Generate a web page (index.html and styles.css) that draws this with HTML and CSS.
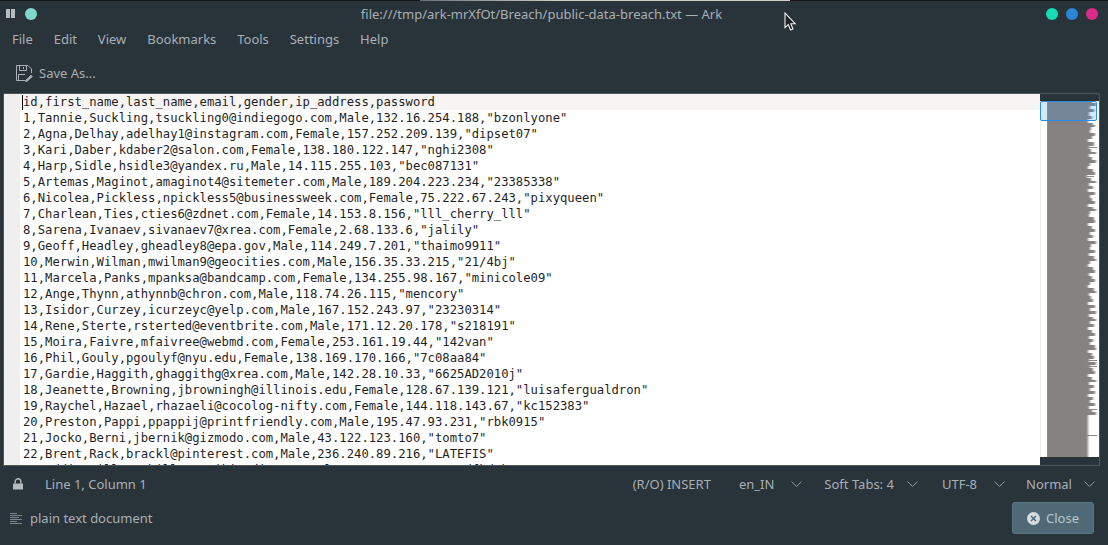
FILE: index.html
```html
<!DOCTYPE html>
<html lang="en">
<head>
    <meta charset="UTF-8" />
    <title>public-data-breach.txt — Ark</title>
    <link rel="stylesheet" href="styles.css">
</head>
<body>
    <div class="window">
        <div class="screen-edge"></div>

        <header class="titlebar">
            <div class="title-left">
                <span class="pause-icon"><i></i><i></i></span>
                <span class="dot dot-pale"></span>
            </div>
            <div class="title-text">file:///tmp/ark-mrXfOt/Breach/public-data-breach.txt — Ark</div>
            <div class="title-right">
                <span class="dot dot-green"></span>
                <span class="dot dot-blue"></span>
                <span class="dot dot-pink"></span>
            </div>
        </header>

        <nav class="menubar">
            <span>File</span>
            <span>Edit</span>
            <span>View</span>
            <span>Bookmarks</span>
            <span>Tools</span>
            <span>Settings</span>
            <span>Help</span>
        </nav>

        <div class="toolbar">
            <svg class="save-icon" width="18" height="18" viewBox="0 0 18 18" fill="none" stroke="#aab3b8" stroke-width="1">
                <path d="M10 16.5H1.5V1.5H13L16.5 5V9" />
                <path d="M4.5 1.5V6.5H11.5V1.5M8.5 3V5" />
                <path d="M3.5 16.5V10.5H10" />
                <path d="M10.5 16.5L16 11L17.5 12.5L12 17.5H10.5Z" fill="#aab3b8" stroke-width=".6" />
            </svg>
            <span>Save As...</span>
        </div>

        <main class="editor">
            <div class="gutter"></div>
            <div class="text-area">
                <span class="caret"></span>
                <div class="line line-current">id,first_name,last_name,email,gender,ip_address,password</div>
                <div class="line">1,Tannie,Suckling,tsuckling0@indiegogo.com,Male,132.16.254.188,"bzonlyone"</div>
                <div class="line">2,Agna,Delhay,adelhay1@instagram.com,Female,157.252.209.139,"dipset07"</div>
                <div class="line">3,Kari,Daber,kdaber2@salon.com,Female,138.180.122.147,"nghi2308"</div>
                <div class="line">4,Harp,Sidle,hsidle3@yandex.ru,Male,14.115.255.103,"bec087131"</div>
                <div class="line">5,Artemas,Maginot,amaginot4@sitemeter.com,Male,189.204.223.234,"23385338"</div>
                <div class="line">6,Nicolea,Pickless,npickless5@businessweek.com,Female,75.222.67.243,"pixyqueen"</div>
                <div class="line">7,Charlean,Ties,cties6@zdnet.com,Female,14.153.8.156,"lll_cherry_lll"</div>
                <div class="line">8,Sarena,Ivanaev,sivanaev7@xrea.com,Female,2.68.133.6,"jalily"</div>
                <div class="line">9,Geoff,Headley,gheadley8@epa.gov,Male,114.249.7.201,"thaimo9911"</div>
                <div class="line">10,Merwin,Wilman,mwilman9@geocities.com,Male,156.35.33.215,"21/4bj"</div>
                <div class="line">11,Marcela,Panks,mpanksa@bandcamp.com,Female,134.255.98.167,"minicole09"</div>
                <div class="line">12,Ange,Thynn,athynnb@chron.com,Male,118.74.26.115,"mencory"</div>
                <div class="line">13,Isidor,Curzey,icurzeyc@yelp.com,Male,167.152.243.97,"23230314"</div>
                <div class="line">14,Rene,Sterte,rsterted@eventbrite.com,Male,171.12.20.178,"s218191"</div>
                <div class="line">15,Moira,Faivre,mfaivree@webmd.com,Female,253.161.19.44,"142van"</div>
                <div class="line">16,Phil,Gouly,pgoulyf@nyu.edu,Female,138.169.170.166,"7c08aa84"</div>
                <div class="line">17,Gardie,Haggith,ghaggithg@xrea.com,Male,142.28.10.33,"6625AD2010j"</div>
                <div class="line">18,Jeanette,Browning,jbrowningh@illinois.edu,Female,128.67.139.121,"luisafergualdron"</div>
                <div class="line">19,Raychel,Hazael,rhazaeli@cocolog-nifty.com,Female,144.118.143.67,"kc152383"</div>
                <div class="line">20,Preston,Pappi,ppappij@printfriendly.com,Male,195.47.93.231,"rbk0915"</div>
                <div class="line">21,Jocko,Berni,jbernik@gizmodo.com,Male,43.122.123.160,"tomto7"</div>
                <div class="line">22,Brent,Rack,brackl@pinterest.com,Male,236.240.89.216,"LATEFIS"</div>
                <div class="line">23,Addie,Hiller,ahillerm@wikimedia.org,Male,61.172.148.119,"dfkdsk"</div>
            </div>
            <aside class="minimap">
                <svg class="minimap-text" width="51" height="356" viewBox="0 0 51 356">
                    <defs>
                        <filter id="soft" x="-5%" y="-1%" width="110%" height="102%">
                            <feGaussianBlur stdDeviation="1.1 0.4" />
                        </filter>
                    </defs>
                    <path fill="#858281" filter="url(#soft)" transform="translate(2 0)" d="M-3 -1H43v3H47v3H41v3H45v3H40v4H43v3H39v4H44v2H46v2H42v3H41v3H46v3H43v3H39v3H45v4H40v3H42v3H47v2H40v3H43v3H47v3H41v3H39v3H44v3H46v3H38v3H42v3H47v2H40v3H44v3H39v3H46v3H41v3H43v3H46v3H39v3H44v2H47v2H41v3H40v3H45v3H46v3H39v3H43v3H46v3H41v3H44v3H39v3H47v3H42v3H41v3H46v3H40v3H45v3H47v2H41v3H39v3H44v3H46v3H40v3H43v3H46v3H41v3H39v3H45v3H47v2H40v3H42v3H44v3H39v3H46v3H41v3H47v3H40v3H44v2H47v2H41v3H45v3H39v3H43v3H46v3H40v3H44v3H41v3H46v3H47v2H39v3H43v3H45v3H40v3H47v3H41v3H44v3H46v3H39v3H43v3H47v2H40v3H45v3H41v3H46v3H39v3H44v3H41v3H46v3H40v3H43v3H47v3H39V357H-3Z" />
                    <path fill="none" stroke="#8a8785" stroke-width="1" d="M40 46.5H50M40 75.5H47M40 259.5H50M40 265.5H50M40 308.5H50M40 334.5H50" />
                </svg>
                <div class="minimap-view"></div>
            </aside>
        </main>

        <div class="statusbar">
            <svg class="lock-icon" width="12" height="12" viewBox="0 0 12 12">
                <path fill="#b4bbbf" d="M1 5.5H11V11.5H1Z" />
                <path fill="none" stroke="#b4bbbf" stroke-width="1.4" d="M3.2 5.5V3.6A2.8 2.8 0 0 1 8.8 3.6V5.5" />
            </svg>
            <span class="cursor-pos">Line 1, Column 1</span>
            <span class="mode">(R/O) INSERT</span>
            <span class="combo combo-lang">en_IN <svg class="chevron" width="11" height="6" viewBox="0 0 11 6"><path d="M.5 .5L5.5 5.5L10.5 .5" /></svg></span>
            <span class="combo combo-tabs">Soft Tabs: 4 <svg class="chevron" width="11" height="6" viewBox="0 0 11 6"><path d="M.5 .5L5.5 5.5L10.5 .5" /></svg></span>
            <span class="combo combo-enc">UTF-8 <svg class="chevron" width="11" height="6" viewBox="0 0 11 6"><path d="M.5 .5L5.5 5.5L10.5 .5" /></svg></span>
            <span class="combo combo-syntax">Normal <svg class="chevron" width="11" height="6" viewBox="0 0 11 6"><path d="M.5 .5L5.5 5.5L10.5 .5" /></svg></span>
        </div>

        <footer class="footer">
            <svg class="doc-icon" width="13" height="13" viewBox="0 0 13 13" stroke="#7d878d" stroke-width="1">
                <path d="M0 1.5H7M0 3.5H12M0 5.5H9M0 7.5H12M0 9.5H7M0 11.5H12" />
            </svg>
            <span class="doc-type">plain text document</span>
            <button class="close-btn" type="button">
                <svg width="13" height="13" viewBox="0 0 13 13">
                    <circle cx="6.5" cy="6.5" r="6.5" fill="#d5dcdf" />
                    <path d="M4 4L9 9M9 4L4 9" stroke="#4f6a76" stroke-width="1.5" />
                </svg>
                Close
            </button>
        </footer>

        <svg class="mouse-pointer" width="13" height="20" viewBox="0 0 13 20">
            <path d="M1 1V15.5L4.3 12.6L6.6 18L9 17L6.8 11.7H11.2Z" fill="#1c2226" stroke="#f2f2f2" stroke-width="1.1" />
        </svg>
    </div>
</body>
</html>
```

FILE: styles.css
```css
body {
    margin: 0;
    background-color: #29333a;
    color: #a8b0b5;
    font-family: "Noto Sans", sans-serif;
    font-size: 13px;
    overflow: hidden;
}

.window {
    position: relative;
    display: flex;
    flex-direction: column;
    width: 1108px;
    height: 545px;
}

.screen-edge {
    height: 1px;
    background: linear-gradient(90deg, #14181b 0, #14181b 420px, #6b7276 420px, #cfcfcf 560px, #cfcfcf 790px, #14181b 790px);
}

.titlebar {
    display: flex;
    align-items: center;
    justify-content: space-between;
    height: 25px;
    padding: 0 10px 0 6px;
}

.title-left, .title-right {
    display: flex;
    align-items: center;
}

.title-left {
    gap: 10px;
}

.title-right {
    gap: 8px;
}

.title-text {
    font-size: 13px;
    color: #a8b0b5;
}

.pause-icon {
    display: flex;
    gap: 1px;
}

    .pause-icon i {
        width: 4px;
        height: 9px;
        background: #b6bcc0;
    }

.dot {
    width: 12px;
    height: 12px;
    border-radius: 50%;
}

.dot-pale {
    background: #7fd8cb;
}

.dot-green {
    background: #16dbb3;
}

.dot-blue {
    background: #2a84d8;
}

.dot-pink {
    background: #dc2a8a;
}

.menubar {
    display: flex;
    align-items: center;
    gap: 20.9px;
    height: 26px;
    padding-left: 12px;
}

.toolbar {
    display: flex;
    align-items: center;
    gap: 6px;
    height: 41px;
    padding-left: 15px;
}

.editor {
    display: flex;
    height: 371px;
    margin: 0 8px 0 3px;
    border: 1px solid #4b565d;
    border-radius: 2px 2px 0 0;
    overflow: hidden;
    background: #fff;
}

.gutter {
    width: 16px;
    flex-shrink: 0;
    background: #f0efee;
}

.text-area {
    position: relative;
    flex: 1;
    overflow: hidden;
    font-family: "DejaVu Sans Mono", monospace;
    font-size: 12.23px;
    color: #1f1f1f;
}

.line {
    box-sizing: border-box;
    height: 16px;
    line-height: 15px;
    padding: 1px 0 0 3px;
    white-space: pre;
}

.line-current {
    background: #f6f5f3;
}

.caret {
    position: absolute;
    left: 2px;
    top: 1px;
    width: 1px;
    height: 15px;
    background: #000;
}

.minimap {
    position: relative;
    width: 59px;
    flex-shrink: 0;
    box-sizing: border-box;
    padding: 7px 0 0 7px;
    background:
        linear-gradient(#eeeeee, #eeeeee) 0 7px / 1px 356px no-repeat,
        linear-gradient(#29333a 0, #29333a 7px, #fff 7px, #fff 363px, #29333a 363px);
}

.minimap-text {
    display: block;
}

.minimap-view {
    position: absolute;
    left: 0;
    top: 7px;
    width: 55px;
    height: 18px;
    background: rgba(61, 150, 233, 0.22);
    border: 1px solid #2a8ce6;
    border-radius: 2px;
}

.statusbar {
    position: relative;
    display: flex;
    align-items: center;
    height: 36px;
    padding-left: 12px;
}

.cursor-pos {
    margin-left: 21px;
}

.mode {
    margin-left: 486px;
}

.combo {
    display: inline-flex;
    align-items: center;
}

.combo-lang {
    gap: 17px;
    margin-left: 28px;
}

.combo-tabs {
    gap: 13px;
    margin-left: 22px;
}

.combo-enc {
    gap: 17px;
    margin-left: 24px;
}

.combo-syntax {
    gap: 12px;
    margin-left: 21px;
}

.chevron {
    fill: none;
    stroke: #8d979c;
    stroke-width: 1;
}

.footer {
    display: flex;
    align-items: flex-start;
    height: 43px;
    padding-left: 10px;
}

.doc-icon {
    margin-top: 10px;
}

.doc-type {
    margin-left: 7px;
    margin-top: 7px;
}

.close-btn {
    display: flex;
    align-items: center;
    justify-content: center;
    gap: 6px;
    width: 82px;
    height: 32px;
    margin-left: auto;
    margin-right: 14px;
    background: #4f6a76;
    border: 1px solid #5b7683;
    border-radius: 3px;
    color: #b9c6cc;
    font-family: "Noto Sans", sans-serif;
    font-size: 13px;
}

.mouse-pointer {
    position: absolute;
    left: 784px;
    top: 12px;
}
```
